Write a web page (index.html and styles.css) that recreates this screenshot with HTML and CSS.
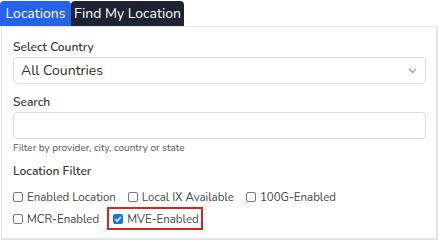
FILE: index.html
```html
<!DOCTYPE html>
<html>
<head>
<meta charset="utf-8">
<link rel="stylesheet" href="styles.css">
</head>
<body>
<div class="wrap">
  <div class="tabs">
    <div class="tab active">Locations</div>
    <div class="tab dark">Find My Location</div>
  </div>
  <div class="panel">
    <div class="field">
      <label class="lbl">Select Country</label>
      <div class="select">
        <span>All Countries</span>
        <svg class="chev" width="9" height="6" viewBox="0 0 9 6"><path d="M1 1l3.5 3.5L8 1" fill="none" stroke="#9a9aa4" stroke-width="1.2"/></svg>
      </div>
    </div>
    <div class="field">
      <label class="lbl">Search</label>
      <div class="input"></div>
      <div class="help">Filter by provider, city, country or state</div>
    </div>
    <div class="field filter">
      <label class="lbl">Location Filter</label>
      <div class="checks">
        <label class="chk"><span class="box"></span>Enabled Location</label>
        <label class="chk"><span class="box"></span>Local IX Available</label>
        <label class="chk"><span class="box"></span>100G-Enabled</label>
      </div>
      <div class="checks">
        <label class="chk"><span class="box"></span>MCR-Enabled</label>
        <label class="chk highlight"><span class="box on"><svg width="10" height="10" viewBox="0 0 10 10"><path d="M2.3 5.2l1.9 1.9 3.6-4" fill="none" stroke="#fff" stroke-width="1.5"/></svg></span>MVE-Enabled</label>
      </div>
    </div>
  </div>
</div>
</body>
</html>
```
FILE: styles.css
```css
* { box-sizing: border-box; }
body {
  margin: 0;
  background: #fff;
  font-family: "Nunito", "Lato", "Noto Sans", sans-serif;
  color: #333;
}
.wrap { width: 439px; height: 245px; }
.tabs { display: flex; height: 26px; padding-top: 1px; }
.tab {
  font-size: 14px;
  color: #fff;
  line-height: 25px;
  border-radius: 4px 4px 0 0;
  white-space: nowrap;
  text-align: center;
}
.tab.active { background: #2563eb; width: 71px; }
.tab.dark { background: #1e2433; width: 113px; }
.panel {
  margin-left: 1px;
  width: 437px;
  height: 214px;
  border: 1px solid #e4e4e8;
  border-right-width: 2px;
  border-bottom-width: 2px;
  border-top-color: #e8e8ec;
  padding: 12px 10px 0 11px;
}
.field { display: flex; flex-direction: column; }
.lbl { font-size: 12px; font-weight: 600; color: #3a3a3a; line-height: 16px; height: 17px; }
.select {
  margin-top: 1px;
  height: 27px;
  border: 1px solid #dcdce0;
  border-radius: 4px;
  display: flex;
  align-items: center;
  justify-content: space-between;
  padding: 0 8px 0 7px;
  font-size: 14px;
  color: #2e2e2e;
}
.chev { margin-top: 1px; }
.field + .field { margin-top: 10px; }
.input {
  margin-top: 1px;
  height: 27px;
  border: 1px solid #dcdce0;
  border-radius: 4px;
}
.help { font-size: 10px; color: #555; margin-top: 3px; line-height: 13px; }
.field.filter { margin-top: 8px; }
.checks { display: flex; gap: 12px; margin-top: 7px; }
.checks + .checks { margin-top: 3px; }
.chk {
  display: flex; align-items: center;
  font-size: 11.5px; color: #444;
  height: 19px;
  gap: 4px;
}
.box {
  width: 10px; height: 10px;
  border: 1px solid #777;
  border-radius: 2px;
  display: inline-flex;
}
.box.on { background: #1a73e8; border-color: #1a73e8; }
.box.on svg { margin: -1px; }
.highlight {
  outline: 2px solid #d9261c;
  outline-offset: 0;
  padding: 0 2px 0 4px;
  margin-left: -2px;
  height: 19px;
}
```
